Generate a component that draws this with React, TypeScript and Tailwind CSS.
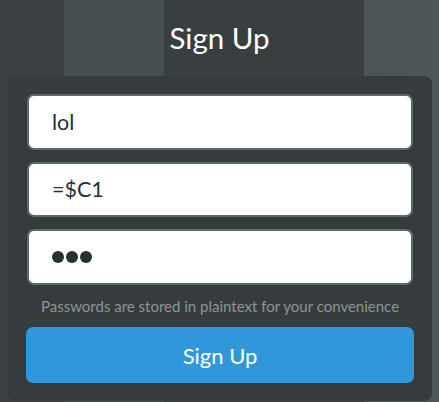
import React from "react";

export default function App() {
  return (
    <div
      className="w-[439px] h-[402px] overflow-hidden bg-[linear-gradient(to_right,#3a4042_0px,#3a4042_64px,#465050_64px,#465050_164px,#393f41_164px,#393f41_364px,#4b5354_364px,#4f5859_439px)]"
      style={{ fontFamily: "Lato, 'Open Sans', sans-serif" }}
    >
      <div className="h-[76px] flex items-center justify-center pb-[1px]">
        <h1 className="text-[29.5px] text-white leading-none">Sign Up</h1>
      </div>
      <div className="mx-[8px] w-[424px] h-[325px] rounded-[8px] bg-[#363c3e] px-[19px] pt-[18px] flex flex-col">
        <div className="h-[56px] rounded-[7px] border-2 border-[#5d6a6b] bg-white flex items-center pl-[23px] text-[21.5px] text-[#263035]">
          lol
        </div>
        <div className="mt-[12px] h-[55px] rounded-[7px] border-2 border-[#5d6a6b] bg-white flex items-center pl-[23px] text-[21.5px] text-[#263035]">
          =$C1
        </div>
        <div className="mt-[12px] h-[56px] rounded-[7px] border-2 border-[#5d6a6b] bg-white flex items-center pl-[23px] gap-[2px]">
          <span className="w-[12px] h-[12px] rounded-full bg-[#263035]" />
          <span className="w-[12px] h-[12px] rounded-full bg-[#263035]" />
          <span className="w-[12px] h-[12px] rounded-full bg-[#263035]" />
        </div>
        <p className="mt-[11px] text-center text-[15px] leading-[20px] text-[#8b9696]">
          Passwords are stored in plaintext for your convenience
        </p>
        <button className="mt-[11px] -mx-[1px] h-[56px] rounded-[7px] bg-[#3197dc] text-white text-[22px] flex items-center justify-center">
          Sign Up
        </button>
      </div>
    </div>
  );
}
